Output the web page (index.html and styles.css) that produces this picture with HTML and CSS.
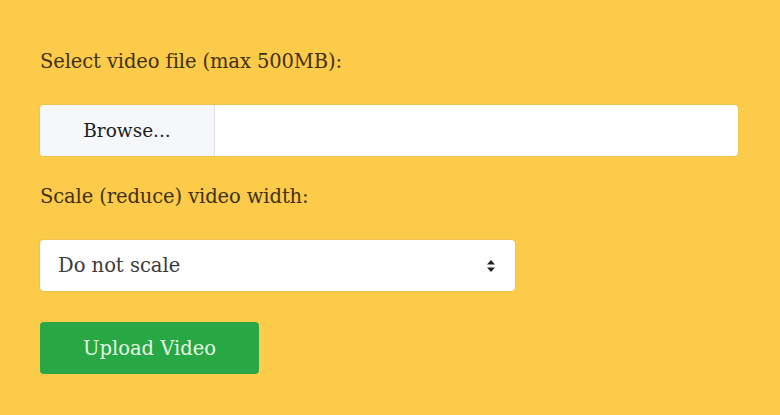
FILE: index.html
```html
<!DOCTYPE html>
<html>
<head>
<meta charset="utf-8">
<link rel="stylesheet" href="styles.css">
</head>
<body>
<div class="page">
  <div class="label">Select video file (max 500MB):</div>
  <div class="file">
    <div class="browse">Browse...</div>
    <div class="filename"></div>
  </div>
  <div class="label label2">Scale (reduce) video width:</div>
  <div class="select">
    <span>Do not scale</span>
    <svg class="arrows" width="10" height="14" viewBox="0 0 10 14"><path d="M5 1 L9 5.5 H1 Z M5 13 L9 8.5 H1 Z" fill="#222"/></svg>
  </div>
  <div class="btn">Upload Video</div>
</div>
</body>
</html>
```
FILE: styles.css
```css
html, body { margin: 0; padding: 0; }
body {
  width: 780px; height: 415px; overflow: hidden;
  background: #fdcb4a;
  font-family: "DejaVu Serif", "Liberation Serif", serif;
}
.page {
  padding: 48px 0 0 40px;
  display: flex; flex-direction: column; align-items: flex-start;
}
.label {
  font-size: 19.5px; color: #3e3116; line-height: 28px;
  letter-spacing: -0.1px;
}
.file {
  margin-top: 29px;
  width: 698px; height: 51px;
  background: #fff; border-radius: 4px;
  display: flex; overflow: hidden;
  box-shadow: 0 0 0 1px rgba(230,190,80,0.6);
}
.browse {
  width: 174px; background: #f5f7fa;
  border-right: 1px solid #dde0e4;
  display: flex; align-items: center; justify-content: center;
  font-size: 18.5px; color: #1e1e1e;
}
.filename { flex: 1; }
.label2 { margin-top: 27px; }
.select {
  margin-top: 29px;
  width: 475px; height: 51px; box-sizing: border-box;
  background: #fff; border-radius: 4px;
  display: flex; align-items: center; justify-content: space-between;
  padding: 0 19px 0 18px;
  font-size: 19.5px; color: #3a3a3a;
  box-shadow: 0 0 0 1px rgba(230,190,80,0.6);
}
.arrows { display: block; }
.btn {
  margin-top: 31px;
  width: 219px; height: 52px;
  background: #28a745; border-radius: 4px;
  display: flex; align-items: center; justify-content: center;
  color: #e6f8e0; font-size: 19.5px;
}
```
